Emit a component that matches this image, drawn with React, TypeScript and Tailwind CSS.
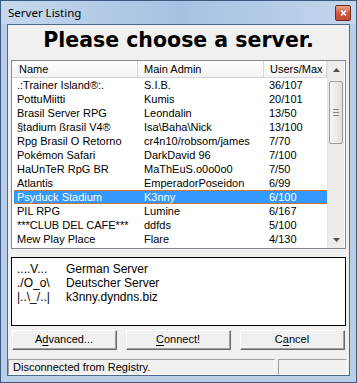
const ROWS = [
  [".:Trainer Island®:.", "S.I.B.", "36/107"],
  ["PottuMiitti", "Kumis", "20/101"],
  ["Brasil Server RPG", "Leondalin", "13/50"],
  ["§tadium ßrasil V4®", "Isa\\Baha\\Nick", "13/100"],
  ["Rpg Brasil O Retorno", "cr4n10/robsom/james", "7/70"],
  ["Pokémon Safari", "DarkDavid 96", "7/100"],
  ["HaUnTeR RpG BR", "MaThEuS.o0o0o0", "7/50"],
  ["Atlantis", "EmperadorPoseidon", "6/99"],
  ["Psyduck Stadium", "K3nny", "6/100"],
  ["PIL RPG", "Lumine", "6/167"],
  ["***CLUB DEL CAFE***", "ddfds", "5/100"],
  ["Mew Play Place", "Flare", "4/130"],
];

const SELECTED = 8;

function Btn({ pre, u, post }: { pre: string; u: string; post: string }) {
  return (
    <div className="h-[20px] w-[105px] border-t border-l border-t-white border-l-white border-r border-b border-r-[#696969] border-b-[#696969]">
      <div className="flex h-full items-center justify-center border-r border-b border-r-[#a0a0a0] border-b-[#a0a0a0] bg-[#f0f0f0] text-[11px] text-black">
        {pre}
        <span className="underline underline-offset-[2px]">{u}</span>
        {post}
      </div>
    </div>
  );
}

function Arrow({ up }: { up?: boolean }) {
  return (
    <svg width="7" height="4" viewBox="0 0 7 4">
      <path d={up ? "M0 4 L3.5 0 L7 4 Z" : "M0 0 L3.5 4 L7 0 Z"} fill="#4d4d4d" />
    </svg>
  );
}

export default function App() {
  return (
    <div
      className="flex h-[383px] w-[357px] flex-col overflow-hidden border border-[#3c5a80] bg-[#b9cfe8]"
      style={{ fontFamily: '"Liberation Sans", Arial, sans-serif' }}
    >
      {/* title bar */}
      <div className="flex h-[23px] shrink-0 items-center justify-between bg-gradient-to-r from-[#c6d8ee] via-[#a5c1e2] to-[#c3d6ec] pl-[7px] pr-[5px]">
        <span className="text-[11.5px] text-black" style={{ fontFamily: '"Noto Sans", sans-serif' }}>
          Server Listing
        </span>
        <div className="flex h-[16px] w-[16px] items-center justify-center rounded-[2px] border border-[#6b2a1c] bg-gradient-to-b from-[#e8a796] via-[#d0573b] to-[#c24a30]">
          <svg width="7" height="6" viewBox="0 0 7 6">
            <path d="M1 0.5 L6 5.5 M6 0.5 L1 5.5" stroke="white" strokeWidth="1.6" />
          </svg>
        </div>
      </div>

      {/* frame + client */}
      <div className="flex flex-1 px-[6px] pb-[6px]">
        <div className="flex flex-1 flex-col border border-[#4d6a8c] bg-[#f0f0f0]">
          <div className="flex h-[35px] items-center justify-center pb-[5px]">
            <h1
              className="text-[20.5px] font-bold text-black"
              style={{ fontFamily: '"DejaVu Sans", Verdana, sans-serif' }}
            >
              Please choose a server.
            </h1>
          </div>

          {/* server list */}
          <div className="mx-[3px] flex h-[189px] border border-[#828790] bg-white text-[11px] text-black">
            <div className="flex w-[315px] flex-col overflow-hidden">
              <div className="flex h-[17px] shrink-0 items-center border-b border-[#d5d5d5] bg-gradient-to-b from-white to-[#f3f3f3]">
                <div className="w-[126px] border-r border-[#d5d5d5] pl-[7px]">Name</div>
                <div className="w-[126px] border-r border-[#d5d5d5] pl-[6px]">Main Admin</div>
                <div className="w-[63px] border-r border-[#d5d5d5] pl-[6px]">Users/Max</div>
              </div>
              {ROWS.map((r, i) => (
                <div
                  key={i}
                  className={`ml-[2px] flex h-[14px] shrink-0 items-center ${
                    i === SELECTED ? "border-y border-dotted border-[#d7752a] bg-[#3399ff] text-white" : ""
                  }`}
                >
                  <div className="w-[124px] truncate pl-[3px]">{r[0]}</div>
                  <div className="w-[126px] truncate pl-[6px]">{r[1]}</div>
                  <div className="w-[63px] truncate pl-[5px]">{r[2]}</div>
                </div>
              ))}
            </div>
            {/* scrollbar */}
            <div className="flex w-[17px] flex-col border-l border-[#e6e6e6] bg-[#ececec]">
              <div className="flex h-[17px] items-center justify-center">
                <Arrow up />
              </div>
              <div className="mx-[1px] mt-[3px] flex h-[63px] flex-col items-center justify-center gap-[2px] rounded-[2px] border border-[#9b9b9b] bg-gradient-to-r from-[#f6f6f6] to-[#dedede]">
                <div className="h-px w-[6px] bg-[#8a8a8a]" />
                <div className="h-px w-[6px] bg-[#8a8a8a]" />
                <div className="h-px w-[6px] bg-[#8a8a8a]" />
              </div>
              <div className="flex-1" />
              <div className="flex h-[17px] items-center justify-center">
                <Arrow />
              </div>
            </div>
          </div>

          {/* info box */}
          <div className="mx-[3px] mt-[8px] h-[69px] border border-black bg-white px-[5px] pt-[4px] text-[12px] leading-[14px] text-black">
            <div className="grid grid-cols-[49px_1fr]">
              <span>....V...</span>
              <span>German Server</span>
              <span>./O_o\</span>
              <span>Deutscher Server</span>
              <span>|..\_/..|</span>
              <span>k3nny.dyndns.biz</span>
            </div>
          </div>

          {/* buttons */}
          <div className="mt-[4px] flex gap-[9px] px-[4px]">
            <Btn pre="A" u="d" post="vanced..." />
            <Btn pre="" u="C" post="onnect!" />
            <Btn pre="C" u="a" post="ncel" />
          </div>

          {/* status bar */}
          <div className="mt-[9px] flex h-[16px] gap-[3px] text-[11px] text-black">
            <div className="flex w-[267px] items-center border-t border-l border-t-[#a0a0a0] border-l-[#a0a0a0] border-r border-b border-r-white border-b-white pl-[4px]">
              Disconnected from Registry.
            </div>
            <div className="w-[69px] border-t border-l border-t-[#a0a0a0] border-l-[#a0a0a0] border-r border-b border-r-white border-b-white" />
          </div>
        </div>
      </div>
    </div>
  );
}
